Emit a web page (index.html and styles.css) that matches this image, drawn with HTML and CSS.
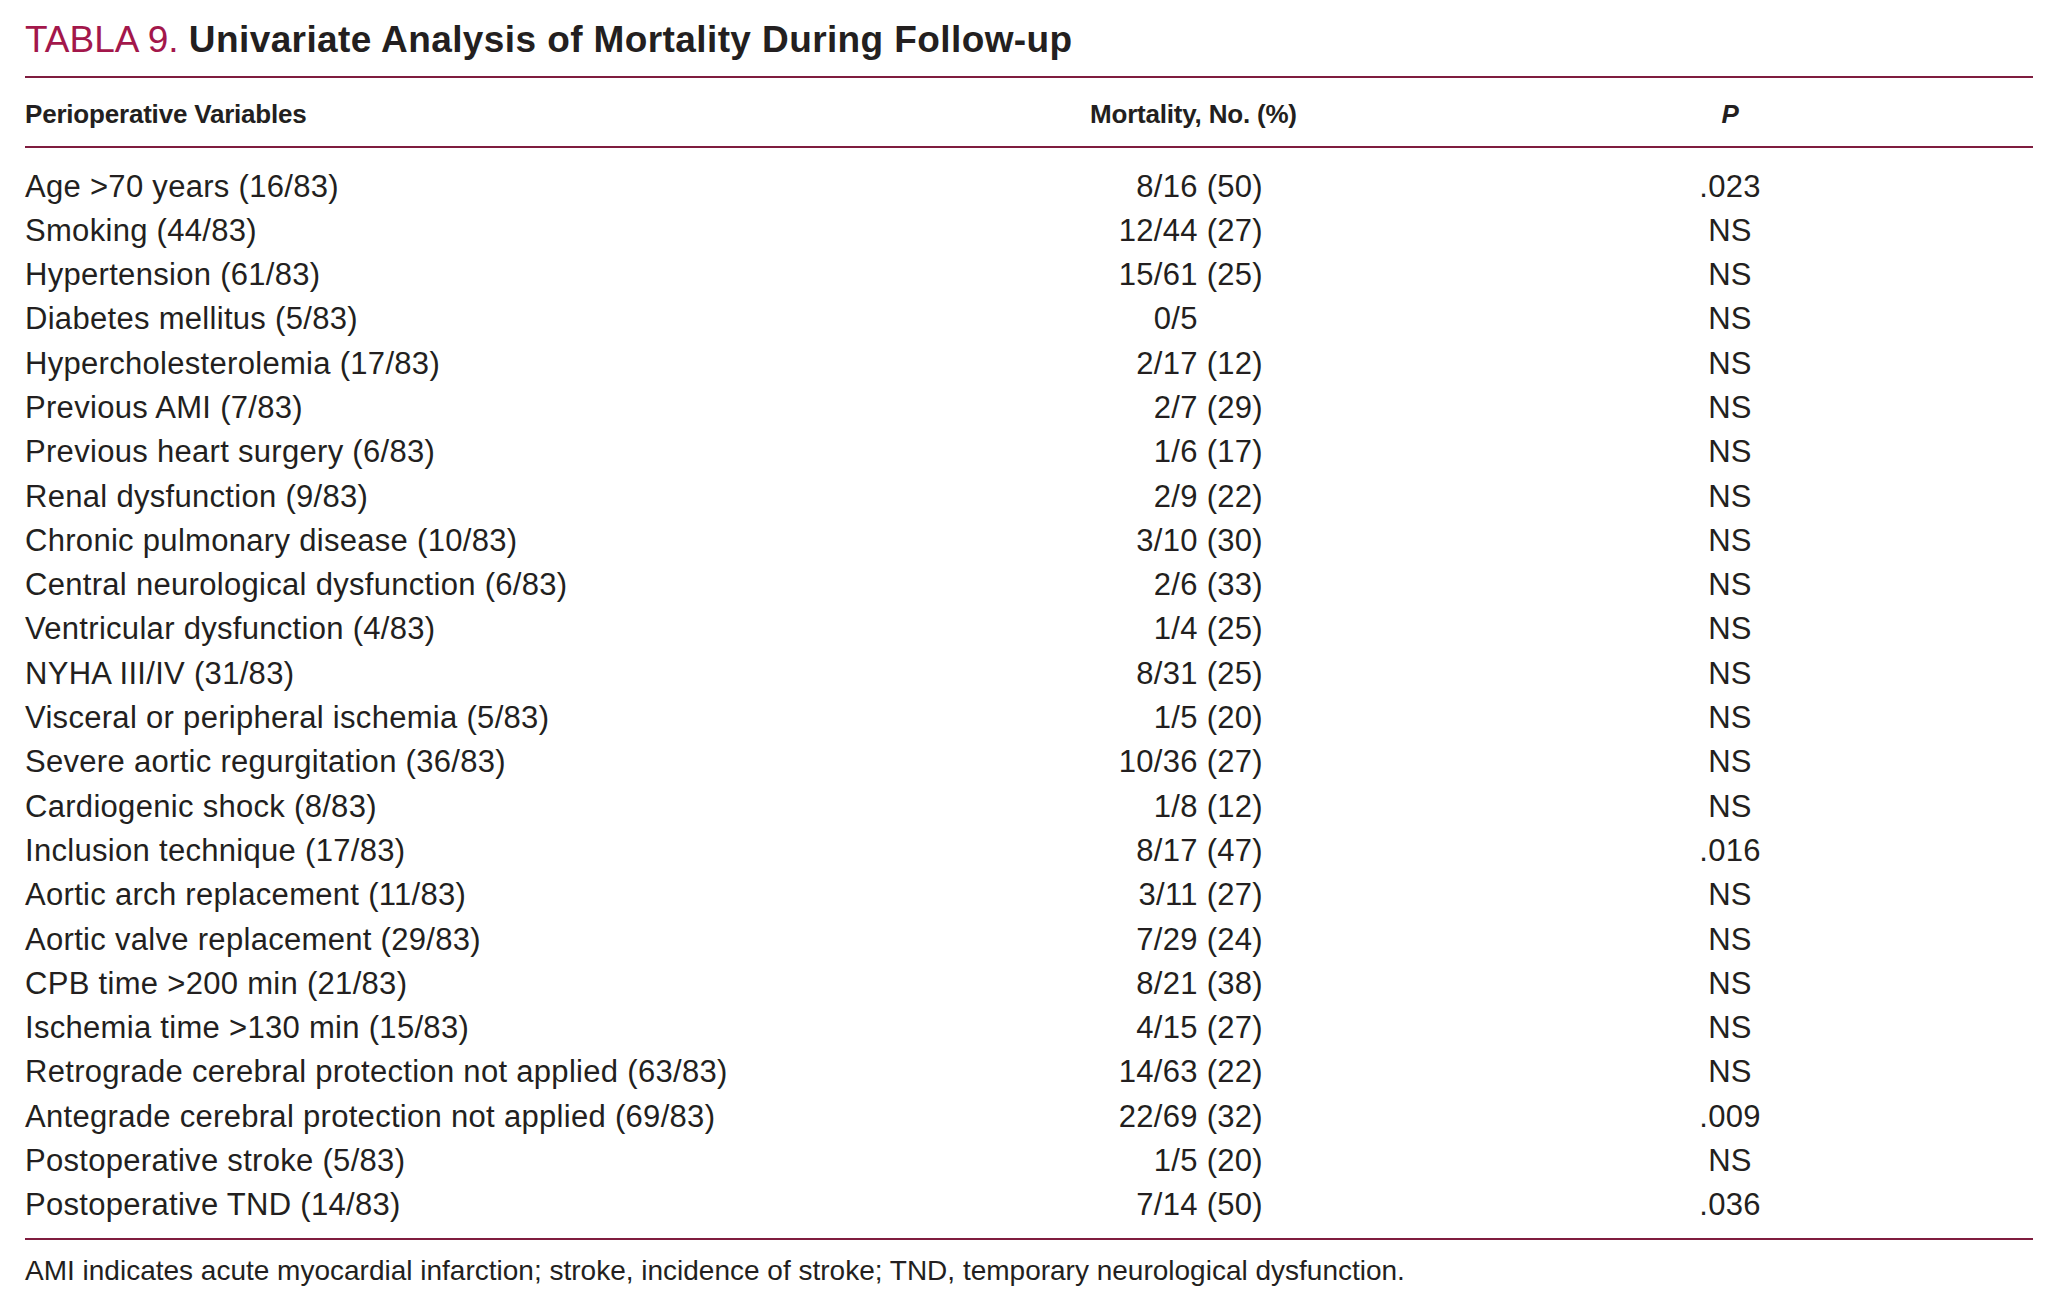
FILE: index.html
```html
<!DOCTYPE html>
<html lang="en">
<head>
<meta charset="utf-8">
<title>Tabla 9</title>
<link rel="stylesheet" href="styles.css">
</head>
<body>
<div class="page">
  <h1 class="title"><span class="label">TABLA 9.</span> <span class="name">Univariate Analysis of Mortality During Follow-up</span></h1>
  <table class="data">
    <thead>
      <tr>
        <th class="c1">Perioperative Variables</th>
        <th class="c2">Mortality, No. (%)</th>
        <th class="c3"><i>P</i></th>
      </tr>
    </thead>
    <tbody>
      <tr class="first"><td class="c1">Age &gt;70 years (16/83)</td><td class="c2">8/16 (50)</td><td class="c3">.023</td></tr>
      <tr><td class="c1">Smoking (44/83)</td><td class="c2">12/44 (27)</td><td class="c3">NS</td></tr>
      <tr><td class="c1">Hypertension (61/83)</td><td class="c2">15/61 (25)</td><td class="c3">NS</td></tr>
      <tr><td class="c1">Diabetes mellitus (5/83)</td><td class="c2">0/5<span class="pad"> (00)</span></td><td class="c3">NS</td></tr>
      <tr><td class="c1">Hypercholesterolemia (17/83)</td><td class="c2">2/17 (12)</td><td class="c3">NS</td></tr>
      <tr><td class="c1">Previous AMI (7/83)</td><td class="c2">2/7 (29)</td><td class="c3">NS</td></tr>
      <tr><td class="c1">Previous heart surgery (6/83)</td><td class="c2">1/6 (17)</td><td class="c3">NS</td></tr>
      <tr><td class="c1">Renal dysfunction (9/83)</td><td class="c2">2/9 (22)</td><td class="c3">NS</td></tr>
      <tr><td class="c1">Chronic pulmonary disease (10/83)</td><td class="c2">3/10 (30)</td><td class="c3">NS</td></tr>
      <tr><td class="c1">Central neurological dysfunction (6/83)</td><td class="c2">2/6 (33)</td><td class="c3">NS</td></tr>
      <tr><td class="c1">Ventricular dysfunction (4/83)</td><td class="c2">1/4 (25)</td><td class="c3">NS</td></tr>
      <tr><td class="c1">NYHA III/IV (31/83)</td><td class="c2">8/31 (25)</td><td class="c3">NS</td></tr>
      <tr><td class="c1">Visceral or peripheral ischemia (5/83)</td><td class="c2">1/5 (20)</td><td class="c3">NS</td></tr>
      <tr><td class="c1">Severe aortic regurgitation (36/83)</td><td class="c2">10/36 (27)</td><td class="c3">NS</td></tr>
      <tr><td class="c1">Cardiogenic shock (8/83)</td><td class="c2">1/8 (12)</td><td class="c3">NS</td></tr>
      <tr><td class="c1">Inclusion technique (17/83)</td><td class="c2">8/17 (47)</td><td class="c3">.016</td></tr>
      <tr><td class="c1">Aortic arch replacement (11/83)</td><td class="c2">3/11 (27)</td><td class="c3">NS</td></tr>
      <tr><td class="c1">Aortic valve replacement (29/83)</td><td class="c2">7/29 (24)</td><td class="c3">NS</td></tr>
      <tr><td class="c1">CPB time &gt;200 min (21/83)</td><td class="c2">8/21 (38)</td><td class="c3">NS</td></tr>
      <tr><td class="c1">Ischemia time &gt;130 min (15/83)</td><td class="c2">4/15 (27)</td><td class="c3">NS</td></tr>
      <tr><td class="c1">Retrograde cerebral protection not applied (63/83)</td><td class="c2">14/63 (22)</td><td class="c3">NS</td></tr>
      <tr><td class="c1">Antegrade cerebral protection not applied (69/83)</td><td class="c2">22/69 (32)</td><td class="c3">.009</td></tr>
      <tr><td class="c1">Postoperative stroke (5/83)</td><td class="c2">1/5 (20)</td><td class="c3">NS</td></tr>
      <tr class="last"><td class="c1">Postoperative TND (14/83)</td><td class="c2">7/14 (50)</td><td class="c3">.036</td></tr>
    </tbody>
  </table>
  <p class="note">AMI indicates acute myocardial infarction; stroke, incidence of stroke; TND, temporary neurological dysfunction.</p>
</div>
</body>
</html>
```
FILE: styles.css
```css
* { box-sizing: border-box; }
html, body { margin: 0; padding: 0; background: #ffffff; }
body { color: #231f20; }

.page {
  width: 2008px;
  margin-left: 25px;
  padding-top: 19px;
}

.title {
  margin: 0;
  font-family: "Liberation Sans", Arial, sans-serif;
  font-size: 37px;
  line-height: 42px;
  font-weight: normal;
  white-space: nowrap;
  padding-bottom: 15px;
  border-bottom: 2px solid #7f1d3f;
}
.title .label { color: #a3174b; }
.title .name { font-weight: bold; color: #231f20; letter-spacing: 0.4px; }

.data {
  width: 2008px;
  border-collapse: collapse;
  table-layout: fixed;
  font-family: "Liberation Sans", Arial, sans-serif;
}
.data th, .data td { padding: 0; white-space: nowrap; }

.data thead tr { border-bottom: 2px solid #7f1d3f; }
.data th {
  height: 69px;
  font-size: 26px;
  line-height: 30px;
  font-weight: bold;
  letter-spacing: -0.2px;
  vertical-align: middle;
  padding-top: 3px;
}
.data th.c1 { text-align: left; width: 1065px; }
.data th.c2 { text-align: left; width: 215px; }
.data th.c3 { text-align: center; padding-left: 122px; }
.data th i { font-style: italic; }

.data td {
  font-size: 31px;
  line-height: 44.3px;
  letter-spacing: 0.3px;
  vertical-align: top;
}
.data tr.first td { padding-top: 16.5px; }
.data tr.last td { padding-bottom: 10.3px; }
.data tbody tr.last { border-bottom: 2px solid #7f1d3f; }

.data td.c1 { text-align: left; }
.data td.c2 { text-align: right; padding-right: 42px; }
.data td.c3 { text-align: center; padding-left: 122px; }
.pad { visibility: hidden; }

.note {
  margin: 0;
  padding-top: 15.5px;
  font-family: "Liberation Sans", Arial, sans-serif;
  font-size: 28px;
  line-height: 32px;
  white-space: nowrap;
}
```
